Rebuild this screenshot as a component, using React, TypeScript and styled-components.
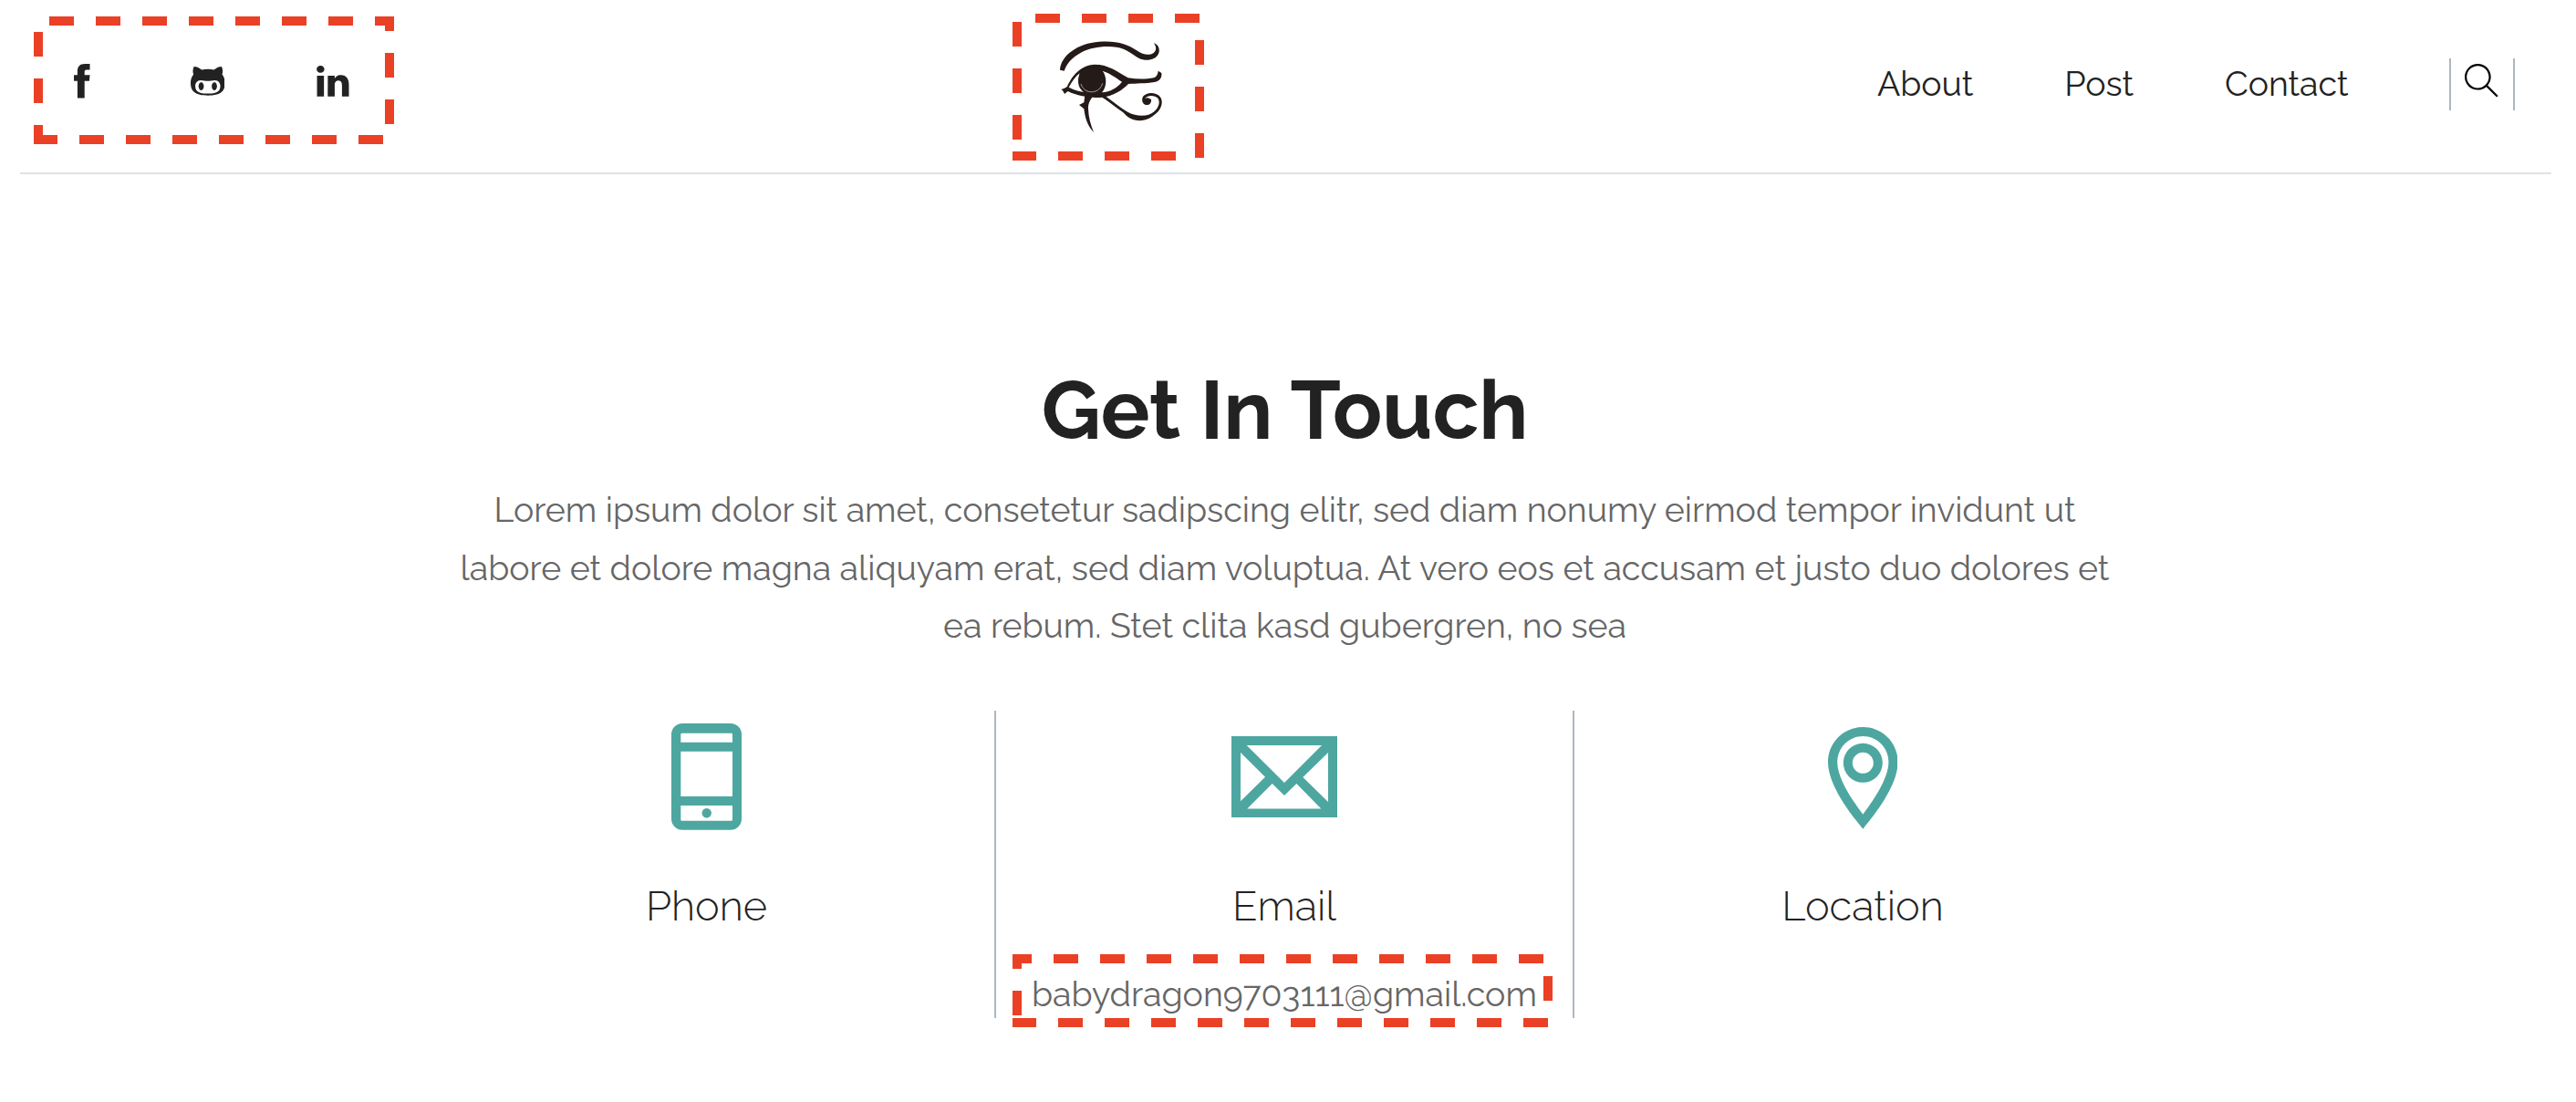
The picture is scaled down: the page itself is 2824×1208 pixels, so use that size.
import React from 'react';
import styled, { createGlobalStyle } from 'styled-components';
import { TfiFacebook, TfiGithub, TfiLinkedin, TfiSearch } from 'react-icons/tfi';

const INK = '#222222';
const MUTED = '#666666';
const TEAL = '#4da7a0';
const RULE = '#dee2e6';
const DIVIDER = '#adb7c2';
const MARK = '#ea4025';

const GlobalStyle = createGlobalStyle`
  body {
    margin: 0;
    background: #fff;
    color: ${INK};
    font-family: Raleway, Lato, 'Open Sans', sans-serif;
  }
`;

const Page = styled.div`
  width: 2824px;
  height: 1208px;
  overflow: hidden;
`;

const Header = styled.header`
  box-sizing: border-box;
  display: flex;
  align-items: flex-start;
  height: 191px;
  margin: 0 27px 0 22px;
  padding: 0 40px 0 15px;
  border-bottom: 2px solid ${RULE};
`;

const Marked = styled.div`
  position: relative;
  box-sizing: border-box;
  flex: none;
  display: flex;
  align-items: flex-start;
`;

const Outline = styled.svg`
  position: absolute;
  inset: 0;
  width: 100%;
  height: 100%;
  fill: none;
  stroke: ${MARK};
  stroke-width: 10;
  stroke-dasharray: 27 24;
  pointer-events: none;
`;

const Social = styled(Marked)`
  width: 395px;
  height: 140px;
  margin-top: 18px;
  padding: 52px 0 0 34.4px;
  gap: 99.8px;
  font-size: 37.6px;
  line-height: 1;

  svg:not(${Outline}) {
    display: block;
    flex: none;
  }
`;

const Brand = styled(Marked)`
  width: 210px;
  height: 161px;
  margin: 15px 0 0 678px;
  padding: 15px 0 0 40px;
`;

const Eye = styled.svg`
  display: block;
  width: 140px;
  height: 125px;
  filter: blur(0.7px);
`;

const Nav = styled.nav`
  display: flex;
  gap: 100px;
  margin: 64px 0 0 738px;
`;

const NavLink = styled.a`
  font-size: 37.4px;
  line-height: 57px;
  color: ${INK};
`;

const SearchButton = styled.button`
  box-sizing: border-box;
  display: flex;
  align-items: flex-start;
  width: 72px;
  height: 57px;
  margin: 64px 0 0 auto;
  padding: 5.5px 0 0 14.6px;
  border: solid ${DIVIDER};
  border-width: 0 2px;
  background: none;
  color: #000;
  font-size: 37.5px;
  line-height: 1;
`;

const Main = styled.main`
  display: flex;
  flex-direction: column;
  align-items: center;
  padding: 206.4px 7px 0 0;
`;

const Title = styled.h1`
  margin: 0;
  font-size: 89.6px;
  font-weight: 700;
  line-height: 106px;
`;

const Intro = styled.p`
  width: 1900px;
  margin: 24.6px 0 0;
  color: ${MUTED};
  font-size: 37.47px;
  line-height: 63.6px;
  text-align: center;
  white-space: pre-line;
`;

const Channels = styled.section`
  display: grid;
  grid-template-columns: 633px 634px 632px;
  grid-template-rows: 337px;
  margin-top: 60.2px;
`;

const Channel = styled.article`
  box-sizing: border-box;
  display: flex;
  flex-direction: column;
  align-items: center;
  min-height: 0;

  &:not(:last-child) {
    border-right: 2px solid ${DIVIDER};
  }
`;

const IconSlot = styled.div`
  flex: none;
  display: flex;
  align-items: center;
  height: 145px;
  color: ${TEAL};
`;

const Glyph = styled.svg<{ $w: number; $h: number; $drop?: number }>`
  display: block;
  width: ${(p) => p.$w}px;
  height: ${(p) => p.$h}px;
  margin-top: ${(p) => p.$drop ?? 0}px;
  fill: currentColor;
  fill-rule: evenodd;
`;

const ChannelName = styled.h2`
  margin: 42.8px 0 0;
  font-size: 45.1px;
  font-weight: 300;
  line-height: 53px;
`;

const Address = styled(Marked)`
  width: 592px;
  height: 80px;
  margin: 26px 4px 0 0;
  padding: 22.2px 0 0 20.9px;
  color: ${MUTED};
  font-size: 37.5px;
  line-height: 44px;
  white-space: nowrap;
`;

const EyeLogo = () => (
  <Eye viewBox="0 0 420 375" fill="#241a18">
    <path d="M36 140C39 92 95 52 165 47C222 43 258 54 292 78C308 90 330 94 345 83C355 74 352 62 345 52C360 56 366 72 360 87C350 109 317 112 295 101C275 90 255 70 222 65C180 60 137 66 105 83C77 98 60 116 50 143Z" />
    <path d="M40 203C47 202 54 199 60 194C76 160 102 125 150 122C197 122 224 146 260 166C290 171 320 171 344 166C355 162 358 153 359 143L370 150C372 165 364 178 347 180C318 185 285 184 261 186C242 205 214 227 168 231C125 231 90 224 62 210L51 219L46 209ZM65 197C85 207 102 212 119 213C97 198 93 170 101 151C86 162 76 178 65 197ZM176 143C190 160 192 194 174 214C202 212 224 199 240 179C218 164 196 149 176 143Z" fillRule="evenodd" />
    <ellipse cx="140" cy="177" rx="44" ry="45" />
    <path d="M105 186C112 208 132 217 153 210C164 206 173 197 176 184" fill="none" stroke="#a59a98" strokeWidth="3" />
    <path d="M118 224L146 224C134 240 128 252 129 268C130 296 137 320 147 345C125 322 118 294 115 268L99 255L115 247Z" />
    <path d="M170 222C202 240 226 266 258 283C286 298 326 300 348 281C371 261 373 233 352 224C331 216 309 224 311 240C313 254 330 254 332 240" fill="none" stroke="#241a18" strokeWidth="9" strokeLinecap="round" />
    <path d="M240 273C266 297 320 305 352 279C330 314 268 320 240 273Z" />
    <circle cx="323" cy="243" r="11" />
  </Eye>
);

const PhoneGlyph = () => (
  <Glyph $w={77} $h={116.7} viewBox="0 0 77 116.7">
    <path d="M12 0H65A12 12 0 0 1 77 12V104.7A12 12 0 0 1 65 116.7H12A12 12 0 0 1 0 104.7V12A12 12 0 0 1 12 0ZM11.5 10.7Q10.3 10.7 10.3 11.9V20.7H67V11.9Q67 10.7 65.8 10.7ZM10.3 30.7V80H67V30.7ZM10.3 90V105.5Q10.3 106.7 11.5 106.7H65.8Q67 106.7 67 105.5V90Z" />
    <circle cx="38.7" cy="98.3" r="5.2" />
  </Glyph>
);

const EnvelopeGlyph = () => (
  <Glyph $w={116} $h={89.5} viewBox="0 0 116 89.5">
    <path d="M0 0H116V89.5H0ZM16.7 10L58 51L99 10ZM10 18V71.3L37 44.7ZM106 18L78.3 45L106 72ZM17.3 79.5H98.3L71.3 52L58 65L44.7 52Z" />
  </Glyph>
);

const PinGlyph = () => (
  <Glyph $w={76.6} $h={111.7} $drop={3} viewBox="0 0 76.6 111.7">
    <path d="M38.3 0C17 0 0 17 0 38.3C0 61 20 90 38.3 111.7C56.6 90 76.6 61 76.6 38.3C76.6 17 59.6 0 38.3 0ZM38.3 10C53.8 10 66.4 22.6 66.4 38.3C66.4 54 54 75 38.3 95.7C22.6 75 10.2 54 10.2 38.3C10.2 22.6 22.8 10 38.3 10Z" />
    <path d="M38.3 17.8A21.5 21.5 0 1 0 38.3 60.8A21.5 21.5 0 1 0 38.3 17.8ZM38.3 27.8A11.5 11.5 0 1 1 38.3 50.8A11.5 11.5 0 1 1 38.3 27.8Z" />
  </Glyph>
);

const INTRO = [
  'Lorem ipsum dolor sit amet, consetetur sadipscing elitr, sed diam nonumy eirmod tempor invidunt ut',
  'labore et dolore magna aliquyam erat, sed diam voluptua. At vero eos et accusam et justo duo dolores et',
  'ea rebum. Stet clita kasd gubergren, no sea',
].join('\n');

export default function App() {
  return (
    <Page>
      <GlobalStyle />
      <Header>
        <Social>
          <TfiFacebook />
          <TfiGithub />
          <TfiLinkedin />
          <Outline viewBox="0 0 395 140">
            <path d="M5 140V5H390V135H0" strokeDashoffset={6} />
          </Outline>
        </Social>
        <Brand>
          <EyeLogo />
          <Outline viewBox="0 0 210 161">
            <path d="M5 156V5H205V158" strokeDashoffset={33} />
            <path d="M179 156H0" />
          </Outline>
        </Brand>
        <Nav>
          <NavLink>About</NavLink>
          <NavLink>Post</NavLink>
          <NavLink>Contact</NavLink>
        </Nav>
        <SearchButton aria-label="Search">
          <TfiSearch />
        </SearchButton>
      </Header>
      <Main>
        <Title>Get In Touch</Title>
        <Intro>{INTRO}</Intro>
        <Channels>
          <Channel>
            <IconSlot>
              <PhoneGlyph />
            </IconSlot>
            <ChannelName>Phone</ChannelName>
          </Channel>
          <Channel>
            <IconSlot>
              <EnvelopeGlyph />
            </IconSlot>
            <ChannelName>Email</ChannelName>
            <Address>
              babydragon9703111@gmail.com
              <Outline viewBox="0 0 592 80">
                <path d="M5 75V5H587V75H0" strokeDashoffset={43} />
              </Outline>
            </Address>
          </Channel>
          <Channel>
            <IconSlot>
              <PinGlyph />
            </IconSlot>
            <ChannelName>Location</ChannelName>
          </Channel>
        </Channels>
      </Main>
    </Page>
  );
}
